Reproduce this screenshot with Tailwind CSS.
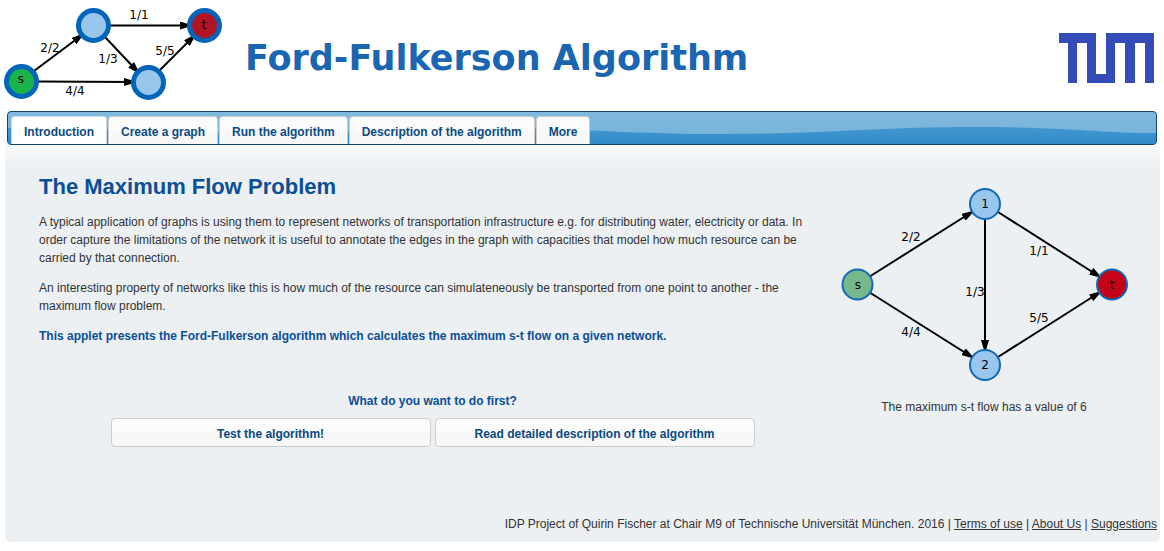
<!DOCTYPE html>
<html lang="en">
<head>
<meta charset="utf-8">
<meta name="viewport" content="width=device-width, initial-scale=1">
<title>Ford-Fulkerson Algorithm</title>
<script src="https://cdn.jsdelivr.net/npm/@tailwindcss/browser@4"></script>
</head>
<body class="bg-white font-['Liberation_Sans',Arial,sans-serif] text-[12px] leading-[18px] text-[#333333]">
<header class="flex h-[109px] items-start pr-[10px]">
  <svg class="shrink-0 font-['DejaVu_Sans',sans-serif] text-[12px]" width="230" height="105" viewBox="0 0 230 105" role="img" aria-label="Example flow network">
    <defs>
      <marker id="arrow" viewBox="0 0 10 8" refX="10" refY="4" markerWidth="10" markerHeight="8" markerUnits="userSpaceOnUse" orient="auto"><path d="M0 0L10 3V5L0 8Z" fill="#000"/></marker>
    </defs>
    <g stroke="#000" stroke-width="2">
      <path d="M34 71L82 35" marker-end="url(#arrow)"/>
      <path d="M110 25.500H190" marker-end="url(#arrow)"/>
      <path d="M105 37L138 72" marker-end="url(#arrow)"/>
      <path d="M38 81.500L134 82" marker-end="url(#arrow)"/>
      <path d="M160 70L194 36" marker-end="url(#arrow)"/>
    </g>
    <g stroke="#0365b9" stroke-width="5">
      <circle cx="21.500" cy="81.500" r="15" fill="#1ab24b"/>
      <circle cx="93.500" cy="25.500" r="15" fill="#98c6ec"/>
      <circle cx="148.500" cy="82.500" r="15" fill="#98c6ec"/>
      <circle cx="204.500" cy="25.500" r="15" fill="#b01524"/>
    </g>
    <g text-anchor="middle" fill="#000">
      <text x="21" y="83">s</text><text x="204" y="29">t</text>
      <text x="50" y="52">2/2</text><text x="139" y="19">1/1</text><text x="108" y="63">1/3</text><text x="165" y="55">5/5</text><text x="75" y="95">4/4</text>
    </g>
  </svg>
  <h1 class="grow pt-[34px] pl-[15px] font-['DejaVu_Sans',sans-serif] text-[35px] leading-[48px] font-bold whitespace-nowrap text-[#1b66b1]">Ford-Fulkerson Algorithm</h1>
  <svg class="mt-[33px] shrink-0" width="95" height="50" viewBox="0 0 95 50" role="img" aria-label="Technische Universität München">
    <path fill="#344cb8" d="M0 0H37V41H47V0H95V50H86V10H76V50H66V10H56V50H28V10H18V50H9V10H0Z"/>
  </svg>
</header>

<main class="mr-1 ml-[5px] rounded-b-md bg-[#ecf0f3] bg-[linear-gradient(#ffffff,#f9fafb_36px,#ecf0f3_56px)] pt-[2px]">
  <nav class="relative mr-[3px] ml-[2px] h-[34px] overflow-hidden rounded-[4px] border border-[#14456b] bg-linear-to-b from-[#81b9df] to-[#74b1d9]" aria-label="Sections">
    <svg class="absolute inset-0 h-full w-full" viewBox="0 0 1148 32" preserveAspectRatio="none" aria-hidden="true">
      <defs><linearGradient id="wave" x1="0" y1="0" x2="0" y2="1"><stop offset="0" stop-color="#4497d1"/><stop offset="1" stop-color="#2f8ac7"/></linearGradient></defs>
      <path fill="url(#wave)" d="M0 16C160 16 160 22 250 22S390 15 467 15S620 22 717 22S870 15 967 15S1090 21 1148 21V32H0Z"/>
    </svg>
    <div class="relative flex h-full items-end gap-px pl-[3px] font-bold text-[#0a4a82]" role="tablist">
      <button type="button" role="tab" aria-selected="true" class="h-[28px] rounded-t-[4px] border border-b-0 border-[#c5dbec] bg-white px-3 pt-[3px] whitespace-nowrap">Introduction</button>
      <button type="button" role="tab" aria-selected="false" class="h-[28px] rounded-t-[4px] border border-b-0 border-[#cccccc] bg-linear-to-b from-[#fbfbfb] from-50% to-[#f8f8f8] to-50% px-3 pt-[3px] whitespace-nowrap">Create a graph</button>
      <button type="button" role="tab" aria-selected="false" class="h-[28px] rounded-t-[4px] border border-b-0 border-[#cccccc] bg-linear-to-b from-[#fbfbfb] from-50% to-[#f8f8f8] to-50% px-3 pt-[3px] whitespace-nowrap">Run the algorithm</button>
      <button type="button" role="tab" aria-selected="false" class="h-[28px] rounded-t-[4px] border border-b-0 border-[#cccccc] bg-linear-to-b from-[#fbfbfb] from-50% to-[#f8f8f8] to-50% px-3 pt-[3px] whitespace-nowrap">Description of the algorithm</button>
      <button type="button" role="tab" aria-selected="false" class="h-[28px] rounded-t-[4px] border border-b-0 border-[#cccccc] bg-linear-to-b from-[#fbfbfb] from-50% to-[#f8f8f8] to-50% px-3 pt-[3px] whitespace-nowrap">More</button>
    </div>
  </nav>

  <div class="flex items-start gap-2 pr-[26px] pl-[34px]">
    <section class="min-w-0 grow pt-7">
      <h2 class="text-[22px] leading-7 font-bold text-[#0b4f96]">The Maximum Flow Problem</h2>
      <p class="mt-3">A typical application of graphs is using them to represent networks of transportation infrastructure e.g. for distributing water, electricity or data. In order capture the limitations of the network it is useful to annotate the edges in the graph with capacities that model how much resource can be carried by that connection.</p>
      <p class="mt-3">An interesting property of networks like this is how much of the resource can simulateneously be transported from one point to another - the maximum flow problem.</p>
      <p class="mt-3 font-bold text-[#0b4f96]">This applet presents the Ford-Fulkerson algorithm which calculates the maximum s-t flow on a given network.</p>
      <div class="mx-auto mt-[47px] max-w-[644px] text-center font-bold">
        <p class="text-[#0b4f96]">What do you want to do first?</p>
        <div class="mt-2 grid grid-cols-2 gap-1 text-[#0a4a82]">
          <button type="button" class="h-[29px] rounded-[4px] border border-[#cccccc] bg-linear-to-b from-[#fcfcfc] from-50% to-[#f8f8f8] to-50% pt-[2px]">Test the algorithm!</button>
          <button type="button" class="h-[29px] rounded-[4px] border border-[#cccccc] bg-linear-to-b from-[#fcfcfc] from-50% to-[#f8f8f8] to-50% pt-[2px]">Read detailed description of the algorithm</button>
        </div>
      </div>
    </section>

    <figure class="w-[300px] shrink-0 pt-[35px] text-center">
      <svg class="w-full font-['DejaVu_Sans',sans-serif] text-[12px]" viewBox="834 180 300 210" role="img" aria-label="Flow network with nodes s, 1, 2 and t">
        <g stroke="#000" stroke-width="2">
          <path d="M870.500 276L972 212" marker-end="url(#arrow)"/>
          <path d="M870.500 293L972 357" marker-end="url(#arrow)"/>
          <path d="M985 219V350" marker-end="url(#arrow)"/>
          <path d="M998 212L1099.500 276.500" marker-end="url(#arrow)"/>
          <path d="M998 357L1099.500 292.500" marker-end="url(#arrow)"/>
        </g>
        <g stroke="#1168b8" stroke-width="2">
          <circle cx="857.500" cy="284.500" r="15" fill="#74b88c"/>
          <circle cx="985" cy="204" r="15" fill="#98c6ec"/>
          <circle cx="985" cy="365" r="15" fill="#98c6ec"/>
          <circle cx="1112" cy="284.500" r="15" fill="#c40519"/>
        </g>
        <g text-anchor="middle" fill="#000">
          <text x="858" y="289">s</text><text x="985" y="208">1</text><text x="985" y="369">2</text><text x="1112" y="289">t</text>
          <text x="911" y="241">2/2</text><text x="911" y="336">4/4</text><text x="975" y="296">1/3</text><text x="1039" y="255">1/1</text><text x="1039" y="322">5/5</text>
        </g>
      </svg>
      <figcaption class="mt-2">The maximum s-t flow has a value of 6</figcaption>
    </figure>
  </div>

  <footer class="mt-[68px] pr-[3px] pb-[9px] text-right">
    IDP Project of Quirin Fischer at Chair M9 of Technische Universität München. 2016 | <a href="#terms" class="underline">Terms of use</a> | <a href="#about" class="underline">About Us</a> | <a href="#suggestions" class="underline">Suggestions</a>
  </footer>
</main>
</body>
</html>
